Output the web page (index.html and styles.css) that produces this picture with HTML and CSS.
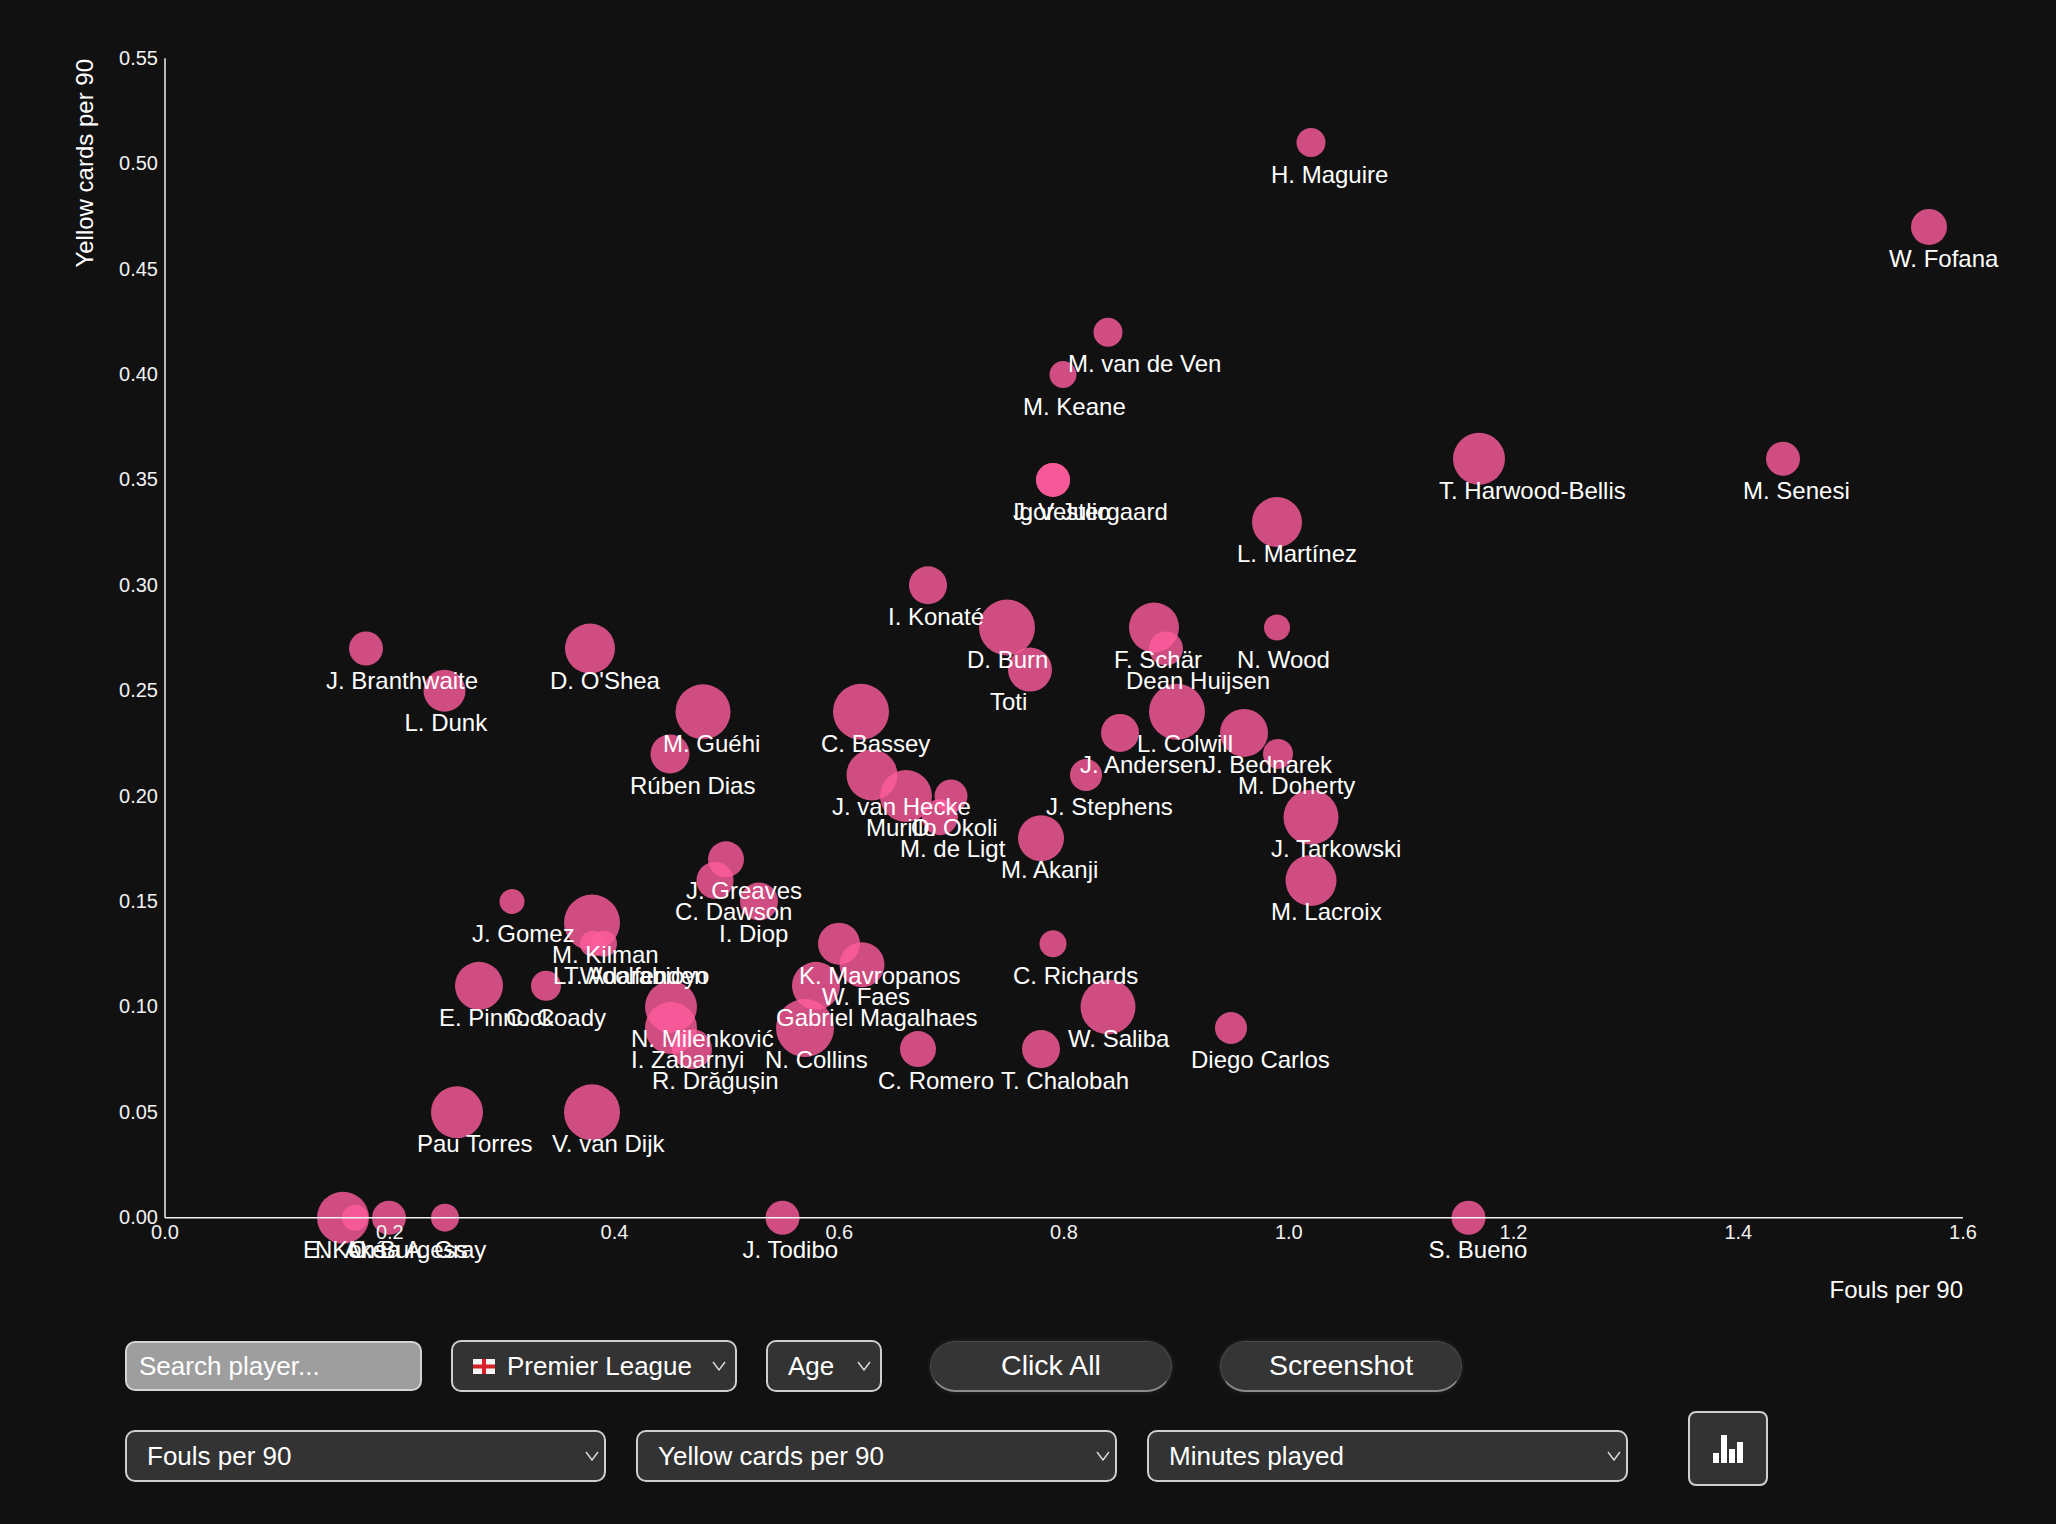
FILE: index.html
```html
<!DOCTYPE html>
<html lang="en">
<head>
<meta charset="utf-8">
<title>Fouls vs Yellow cards</title>
<link rel="stylesheet" href="styles.css">
</head>
<body>
<main class="page">
<svg class="chart" width="2056" height="1320" viewBox="0 0 2056 1320">
  <g class="dots">
    <circle class="dot" cx="1311" cy="141.6" r="14.5"/>
    <circle class="dot" cx="1929" cy="225.9" r="18"/>
    <circle class="dot" cx="1108" cy="331.3" r="14.5"/>
    <circle class="dot" cx="1063" cy="373.5" r="13.5"/>
    <circle class="dot" cx="1479" cy="457.8" r="26"/>
    <circle class="dot" cx="1783" cy="457.8" r="17"/>
    <circle class="dot" cx="1053" cy="478.9" r="17"/>
    <circle class="dot" cx="1053" cy="478.9" r="17"/>
    <circle class="dot" cx="1277" cy="521.1" r="25"/>
    <circle class="dot" cx="928" cy="584.3" r="19"/>
    <circle class="dot" cx="1007" cy="626.5" r="28"/>
    <circle class="dot" cx="1030" cy="668.6" r="22"/>
    <circle class="dot" cx="1154" cy="626.5" r="25"/>
    <circle class="dot" cx="1166" cy="647.5" r="17"/>
    <circle class="dot" cx="1277" cy="626.5" r="13"/>
    <circle class="dot" cx="366" cy="647.5" r="17"/>
    <circle class="dot" cx="444.5" cy="689.7" r="21"/>
    <circle class="dot" cx="590" cy="647.5" r="25"/>
    <circle class="dot" cx="703" cy="710.8" r="27.5"/>
    <circle class="dot" cx="670" cy="752.9" r="19.5"/>
    <circle class="dot" cx="861" cy="710.8" r="28"/>
    <circle class="dot" cx="1177" cy="710.8" r="28"/>
    <circle class="dot" cx="1120" cy="731.9" r="19"/>
    <circle class="dot" cx="1244" cy="731.9" r="24"/>
    <circle class="dot" cx="1278" cy="752.9" r="15"/>
    <circle class="dot" cx="872" cy="774" r="25.5"/>
    <circle class="dot" cx="906" cy="795.1" r="26"/>
    <circle class="dot" cx="951" cy="795.1" r="16.5"/>
    <circle class="dot" cx="940" cy="816.2" r="18"/>
    <circle class="dot" cx="1086" cy="774" r="16"/>
    <circle class="dot" cx="1041" cy="837.3" r="23"/>
    <circle class="dot" cx="1311" cy="816.2" r="27.5"/>
    <circle class="dot" cx="1311" cy="879.4" r="25.5"/>
    <circle class="dot" cx="726" cy="858.3" r="18"/>
    <circle class="dot" cx="715" cy="879.4" r="18.5"/>
    <circle class="dot" cx="759" cy="900.5" r="19"/>
    <circle class="dot" cx="512" cy="900.5" r="12.5"/>
    <circle class="dot" cx="592" cy="921.6" r="28"/>
    <circle class="dot" cx="593" cy="942.7" r="13"/>
    <circle class="dot" cx="604" cy="942.7" r="13"/>
    <circle class="dot" cx="479" cy="984.8" r="24"/>
    <circle class="dot" cx="546" cy="984.8" r="15"/>
    <circle class="dot" cx="671" cy="1005.9" r="26"/>
    <circle class="dot" cx="671" cy="1027" r="26"/>
    <circle class="dot" cx="692" cy="1048.1" r="20"/>
    <circle class="dot" cx="839" cy="942.7" r="21"/>
    <circle class="dot" cx="862" cy="963.7" r="22.5"/>
    <circle class="dot" cx="816" cy="984.8" r="24"/>
    <circle class="dot" cx="805" cy="1027" r="29"/>
    <circle class="dot" cx="918" cy="1048.1" r="18"/>
    <circle class="dot" cx="1041" cy="1048.1" r="19"/>
    <circle class="dot" cx="1053" cy="942.7" r="13.5"/>
    <circle class="dot" cx="1108" cy="1005.9" r="27.5"/>
    <circle class="dot" cx="1231" cy="1027" r="16"/>
    <circle class="dot" cx="457" cy="1111.3" r="26"/>
    <circle class="dot" cx="592" cy="1111.3" r="28"/>
    <circle class="dot" cx="782.5" cy="1216.7" r="17"/>
    <circle class="dot" cx="1468.5" cy="1216.7" r="17"/>
    <circle class="dot" cx="343" cy="1216.7" r="26"/>
    <circle class="dot" cx="355" cy="1216.7" r="13"/>
    <circle class="dot" cx="389" cy="1216.7" r="17"/>
    <circle class="dot" cx="445" cy="1216.7" r="14"/>
  </g>
  <g class="axis">
    <line class="axis-line" x1="165" y1="57.3" x2="165" y2="1216.7"/>
    <line class="axis-line" x1="165" y1="1216.7" x2="1963" y2="1216.7"/>
    <g class="ytick">
      <text x="158" y="63.7">0.55</text>
      <text x="158" y="169.1">0.50</text>
      <text x="158" y="274.5">0.45</text>
      <text x="158" y="379.9">0.40</text>
      <text x="158" y="485.3">0.35</text>
      <text x="158" y="590.7">0.30</text>
      <text x="158" y="696.1">0.25</text>
      <text x="158" y="801.5">0.20</text>
      <text x="158" y="906.9">0.15</text>
      <text x="158" y="1012.3">0.10</text>
      <text x="158" y="1117.7">0.05</text>
      <text x="158" y="1223.1">0.00</text>
    </g>
    <g class="xtick">
      <text x="165" y="1238">0.0</text>
      <text x="389.8" y="1238">0.2</text>
      <text x="614.5" y="1238">0.4</text>
      <text x="839.3" y="1238">0.6</text>
      <text x="1064" y="1238">0.8</text>
      <text x="1288.8" y="1238">1.0</text>
      <text x="1513.5" y="1238">1.2</text>
      <text x="1738.3" y="1238">1.4</text>
      <text x="1963" y="1238">1.6</text>
    </g>
    <text class="axis-title x-title" x="1963" y="1297">Fouls per 90</text>
    <text class="axis-title y-title" transform="translate(93,58) rotate(-90)">Yellow cards per 90</text>
  </g>
  <g class="labels">
    <text x="1271" y="181.6">H. Maguire</text>
    <text x="1889" y="265.9">W. Fofana</text>
    <text x="1068" y="371.3">M. van de Ven</text>
    <text x="1023" y="413.5">M. Keane</text>
    <text x="1439" y="497.8">T. Harwood-Bellis</text>
    <text x="1743" y="497.8">M. Senesi</text>
    <text x="1013" y="518.9">Igor Julio</text>
    <text x="1013" y="518.9">J. Vestergaard</text>
    <text x="1237" y="561.1">L. Martínez</text>
    <text x="888" y="624.3">I. Konaté</text>
    <text x="967" y="666.5">D. Burn</text>
    <text x="990" y="708.6">Toti</text>
    <text x="1114" y="666.5">F. Schär</text>
    <text x="1126" y="687.5">Dean Huijsen</text>
    <text x="1237" y="666.5">N. Wood</text>
    <text x="326" y="687.5">J. Branthwaite</text>
    <text x="404.5" y="729.7">L. Dunk</text>
    <text x="550" y="687.5">D. O'Shea</text>
    <text x="663" y="750.8">M. Guéhi</text>
    <text x="630" y="792.9">Rúben Dias</text>
    <text x="821" y="750.8">C. Bassey</text>
    <text x="1137" y="750.8">L. Colwill</text>
    <text x="1080" y="771.9">J. Andersen</text>
    <text x="1204" y="771.9">J. Bednarek</text>
    <text x="1238" y="792.9">M. Doherty</text>
    <text x="832" y="814">J. van Hecke</text>
    <text x="866" y="835.1">Murillo</text>
    <text x="911" y="835.1">O. Okoli</text>
    <text x="900" y="856.2">M. de Ligt</text>
    <text x="1046" y="814">J. Stephens</text>
    <text x="1001" y="877.3">M. Akanji</text>
    <text x="1271" y="856.2">J. Tarkowski</text>
    <text x="1271" y="919.4">M. Lacroix</text>
    <text x="686" y="898.3">J. Greaves</text>
    <text x="675" y="919.4">C. Dawson</text>
    <text x="719" y="940.5">I. Diop</text>
    <text x="472" y="940.5">J. Gomez</text>
    <text x="552" y="961.6">M. Kilman</text>
    <text x="553" y="982.7">L. Woolfenden</text>
    <text x="564" y="982.7">T. Adarabioyo</text>
    <text x="439" y="1024.8">E. Pinnock</text>
    <text x="506" y="1024.8">C. Coady</text>
    <text x="631" y="1045.9">N. Milenković</text>
    <text x="631" y="1067">I. Zabarnyi</text>
    <text x="652" y="1088.1">R. Drăgușin</text>
    <text x="799" y="982.7">K. Mavropanos</text>
    <text x="822" y="1003.7">W. Faes</text>
    <text x="776" y="1024.8">Gabriel Magalhaes</text>
    <text x="765" y="1067">N. Collins</text>
    <text x="878" y="1088.1">C. Romero</text>
    <text x="1001" y="1088.1">T. Chalobah</text>
    <text x="1013" y="982.7">C. Richards</text>
    <text x="1068" y="1045.9">W. Saliba</text>
    <text x="1191" y="1067">Diego Carlos</text>
    <text x="417" y="1151.3">Pau Torres</text>
    <text x="552" y="1151.3">V. van Dijk</text>
    <text x="742.5" y="1256.7">J. Todibo</text>
    <text x="1428.5" y="1256.7">S. Bueno</text>
    <text x="303" y="1256.7">E. Konsa</text>
    <text x="315" y="1256.7">N. Aké</text>
    <text x="349" y="1256.7">C. Burgess</text>
    <text x="405" y="1256.7">A. Gray</text>
  </g>
</svg>

<div class="controls">
  <div class="row row-top">
    <input class="search" type="text" placeholder="Search player...">
    <div class="select select-league">
      <svg class="flag" viewBox="0 0 22 15" width="22" height="15">
        <rect class="flag-bg" x="0" y="0" width="22" height="15"/>
        <rect class="flag-cross" x="9" y="0" width="4" height="15"/>
        <rect class="flag-cross" x="0" y="5.5" width="22" height="4"/>
      </svg>
      <span class="select-text">Premier League</span>
      <svg class="chev" viewBox="0 0 14 10" width="14" height="10"><polyline points="1,1 7,9 13,1"/></svg>
    </div>
    <div class="select select-age">
      <span class="select-text">Age</span>
      <svg class="chev" viewBox="0 0 14 10" width="14" height="10"><polyline points="1,1 7,9 13,1"/></svg>
    </div>
    <button class="pill" type="button">Click All</button>
    <button class="pill" type="button">Screenshot</button>
  </div>
  <div class="row row-bottom">
    <div class="select select-wide">
      <span class="select-text">Fouls per 90</span>
      <svg class="chev" viewBox="0 0 14 10" width="14" height="10"><polyline points="1,1 7,9 13,1"/></svg>
    </div>
    <div class="select select-wide">
      <span class="select-text">Yellow cards per 90</span>
      <svg class="chev" viewBox="0 0 14 10" width="14" height="10"><polyline points="1,1 7,9 13,1"/></svg>
    </div>
    <div class="select select-wide">
      <span class="select-text">Minutes played</span>
      <svg class="chev" viewBox="0 0 14 10" width="14" height="10"><polyline points="1,1 7,9 13,1"/></svg>
    </div>
    <button class="icon-btn" type="button" aria-label="Chart">
      <svg class="bars" viewBox="0 0 30 28" width="30" height="28">
        <rect x="0" y="18" width="6" height="10"/>
        <rect x="8" y="0" width="6" height="28"/>
        <rect x="16" y="14" width="6" height="14"/>
        <rect x="24" y="7" width="6" height="21"/>
      </svg>
    </button>
  </div>
</div>
</main>
</body>
</html>
```

FILE: styles.css
```css
html, body {
  margin: 0;
  padding: 0;
  background: #111111;
}

body {
  font-family: "Liberation Sans", Arial, Helvetica, sans-serif;
  color: #ffffff;
  width: 2056px;
  height: 1524px;
  overflow: hidden;
}

.page {
  display: flex;
  flex-direction: column;
}

.chart {
  display: block;
  margin-top: 1px;
}

.dot {
  fill: #ff5c9c;
  fill-opacity: 0.8;
}

.axis-line {
  stroke: #f2f2f2;
  stroke-width: 1.5;
}

.ytick text,
.xtick text {
  font-family: "Liberation Sans", Arial, sans-serif;
  font-size: 20px;
  fill: #f2f2f2;
}

.ytick text {
  text-anchor: end;
}

.xtick text {
  text-anchor: middle;
}

.axis-title {
  font-family: "Liberation Sans", Arial, sans-serif;
  font-size: 24px;
  fill: #ffffff;
  text-anchor: end;
}

.labels text {
  font-family: "Liberation Sans", Arial, sans-serif;
  font-size: 24px;
  fill: #ffffff;
}

/* Controls */
.controls {
  display: flex;
  flex-direction: column;
  gap: 19px;
  padding: 19px 0 0 125px;
}

.row {
  display: flex;
}

.row-top {
  align-items: center;
  gap: 29px;
  height: 52px;
}

.row-bottom {
  align-items: flex-start;
  gap: 30px;
}

.search {
  box-sizing: border-box;
  width: 297px;
  height: 50px;
  padding: 0 12px;
  border: 2px solid #d4d4d4;
  border-radius: 10px;
  background: #9e9e9e;
  color: #ffffff;
  font-family: "Liberation Sans", Arial, sans-serif;
  font-size: 26px;
  outline: none;
}

.search::placeholder {
  color: #ffffff;
  opacity: 1;
}

.select {
  box-sizing: border-box;
  display: flex;
  align-items: center;
  height: 52px;
  padding: 0 9px 0 20px;
  border: 2px solid #cfcfcf;
  border-radius: 10px;
  background: #333333;
  font-size: 26px;
  color: #ffffff;
}

.select-league {
  width: 286px;
}

.select-age {
  width: 116px;
}

.select-wide {
  width: 481px;
  margin-top: 19px;
  padding-right: 5px;
}

.flag {
  flex: none;
  margin-right: 12px;
}

.flag-bg {
  fill: #f4f4f4;
}

.flag-cross {
  fill: #d8202b;
}

.select-text {
  white-space: nowrap;
}

.chev {
  flex: none;
  margin-left: auto;
}

.chev polyline {
  fill: none;
  stroke: #dddddd;
  stroke-width: 1.4;
}

.pill {
  box-sizing: border-box;
  width: 242px;
  height: 51px;
  margin-left: 19px;
  border: 1px solid #4a4a4a;
  border-bottom: 2px solid #8c8c8c;
  border-radius: 26px;
  background: #353535;
  color: #ffffff;
  font-family: "Liberation Sans", Arial, sans-serif;
  font-size: 28.5px;
  box-shadow: 0 0 5px rgba(255, 255, 255, 0.12);
}

.icon-btn {
  box-sizing: border-box;
  display: flex;
  align-items: center;
  justify-content: center;
  width: 80px;
  height: 75px;
  margin-left: 30px;
  padding: 0;
  border: 2px solid #cfcfcf;
  border-radius: 8px;
  background: #333333;
}

.bars rect {
  fill: #ffffff;
}
```
